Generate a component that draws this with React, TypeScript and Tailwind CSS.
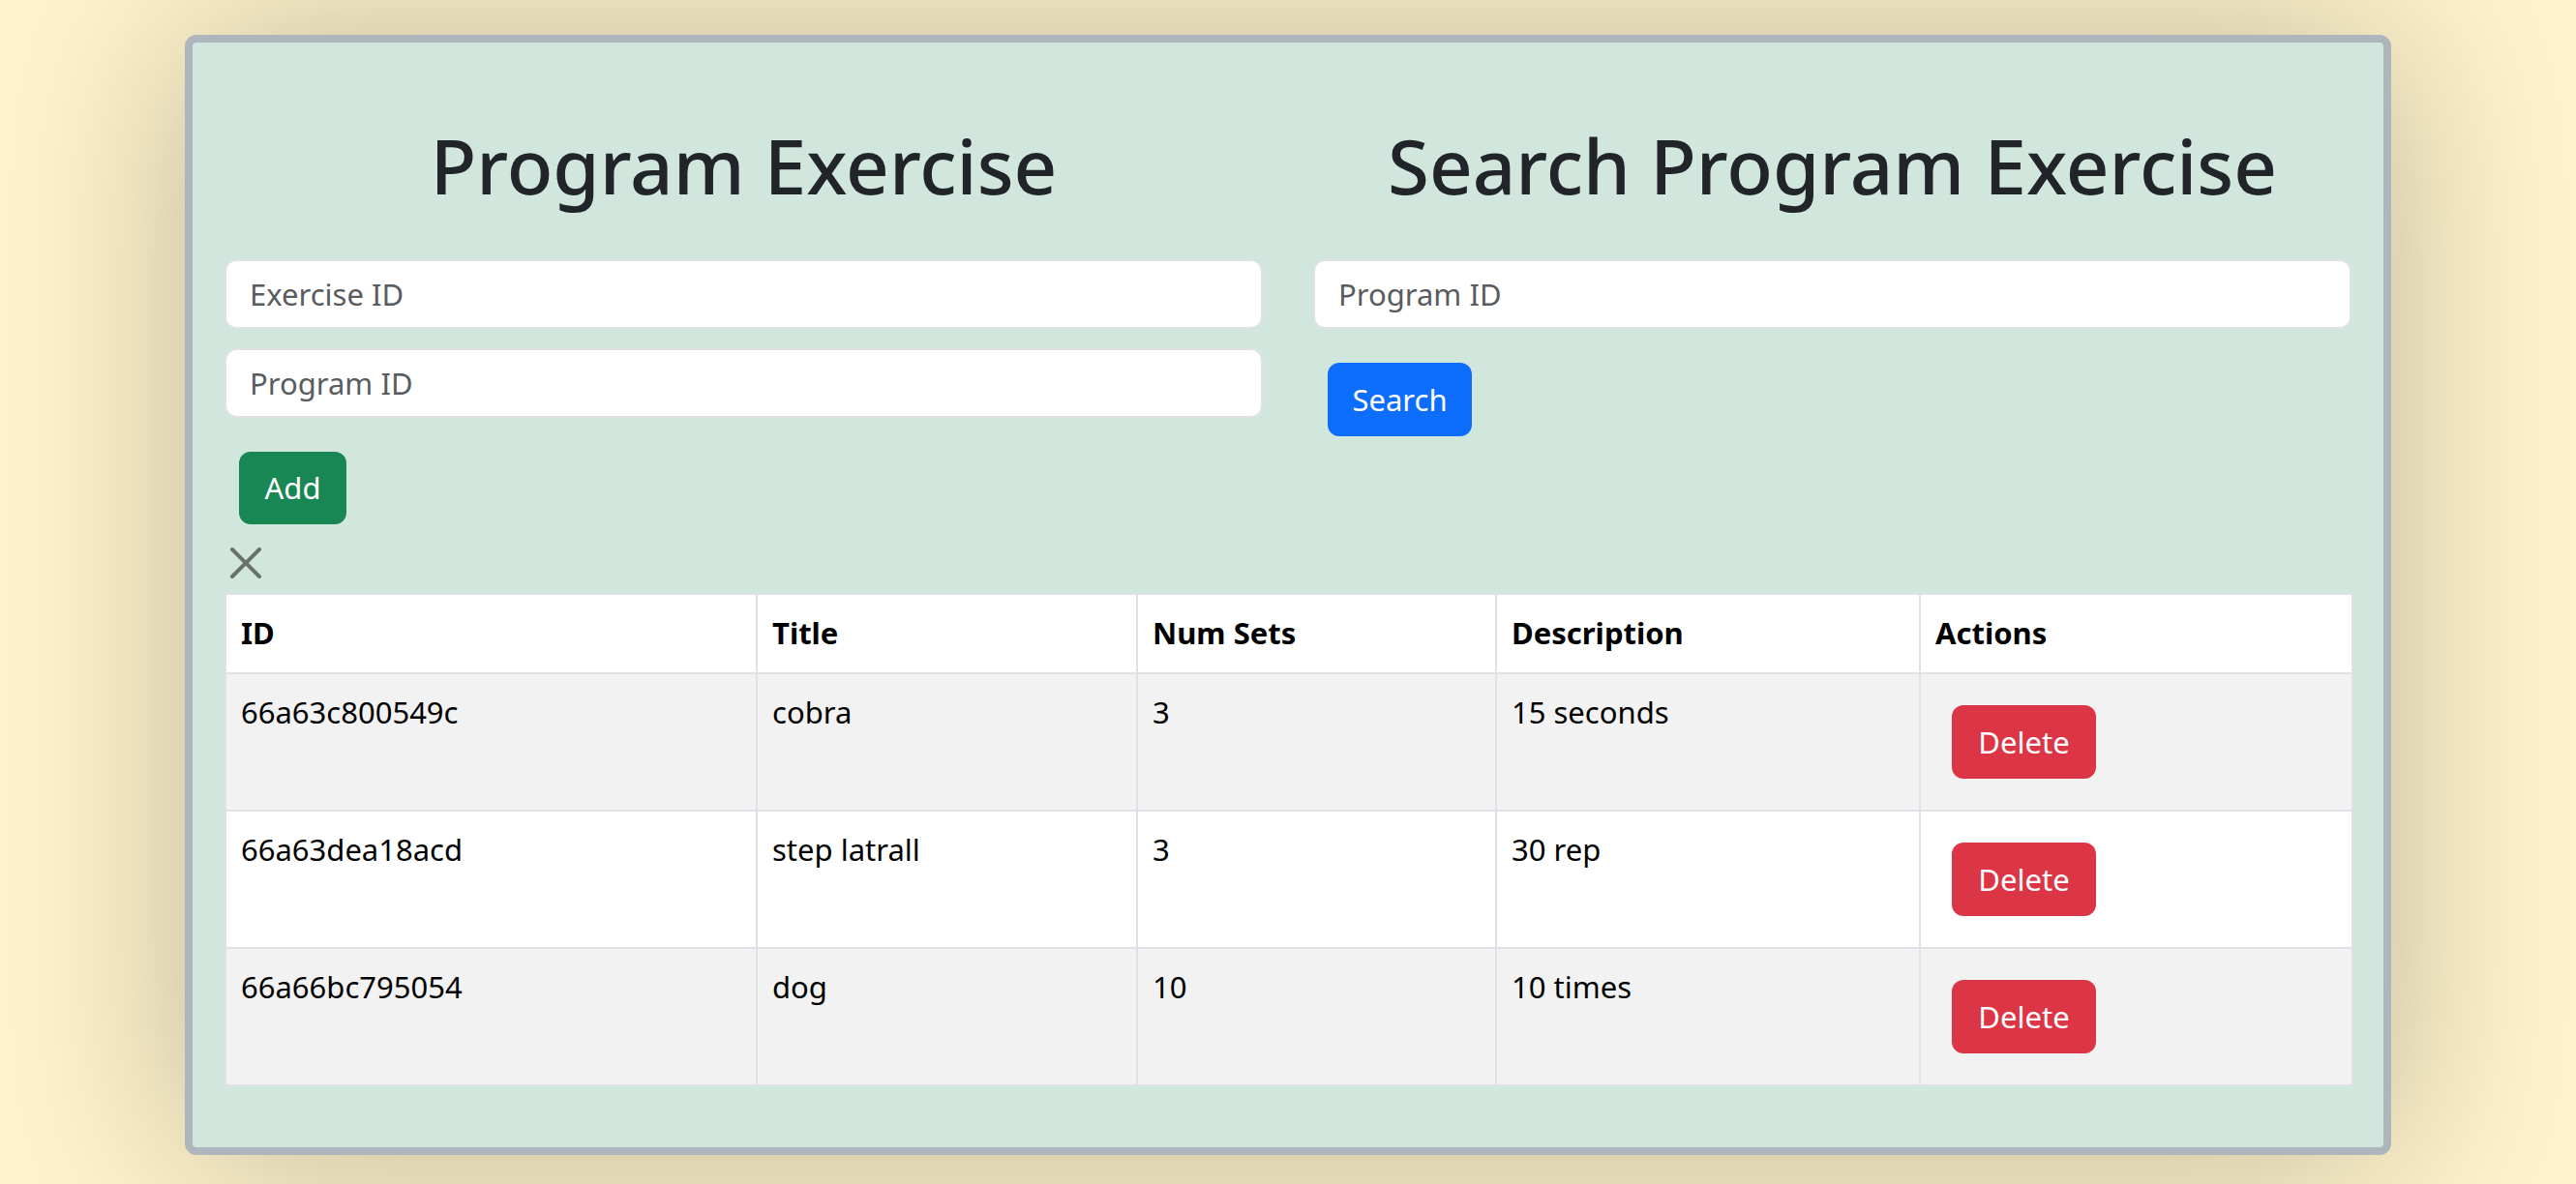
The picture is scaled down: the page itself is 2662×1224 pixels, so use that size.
import React from "react";

const rows = [
  { id: "66a63c800549c", title: "cobra", sets: "3", desc: "15 seconds" },
  { id: "66a63dea18acd", title: "step latrall", sets: "3", desc: "30 rep" },
  { id: "66a66bc795054", title: "dog", sets: "10", desc: "10 times" },
];

const font = { fontFamily: '"Noto Sans", "Open Sans", sans-serif' };

export default function App() {
  return (
    <div
      className="w-full h-screen overflow-hidden bg-[#fff3cd] pt-[36px]"
      style={font}
    >
      <div className="mx-auto w-[2280px] h-[1158px] rounded-[12px] border-8 border-[#adb5bd] bg-[#d1e7dd] shadow-[0_4px_200px_rgba(0,0,0,0.26)] px-[33px] pt-[79px]">
        <div className="grid grid-cols-2 gap-[52px]">
          <div className="flex flex-col items-start">
            <h1 className="w-full text-center text-[78px] leading-[96px] h-[96px] font-medium text-[#212529]">
              Program Exercise
            </h1>
            <input
              className="mt-[49px] w-full h-[72px] rounded-[12px] bg-white border-2 border-[#dee2e6] px-[24px] text-[31px] text-[#212529] placeholder:text-[#595c5f] outline-none"
              placeholder="Exercise ID"
            />
            <input
              className="mt-[20px] w-full h-[72px] rounded-[12px] bg-white border-2 border-[#dee2e6] px-[24px] text-[31px] text-[#212529] placeholder:text-[#595c5f] outline-none"
              placeholder="Program ID"
            />
            <button className="mt-[35px] ml-[15px] w-[111px] h-[75px] rounded-[12px] bg-[#198754] text-white text-[31px] flex items-center justify-center">
              Add
            </button>
          </div>
          <div className="flex flex-col items-start">
            <h1 className="w-full text-center text-[78px] leading-[96px] h-[96px] font-medium text-[#212529]">
              Search Program Exercise
            </h1>
            <input
              className="mt-[49px] w-full h-[72px] rounded-[12px] bg-white border-2 border-[#dee2e6] px-[24px] text-[31px] text-[#212529] placeholder:text-[#595c5f] outline-none"
              placeholder="Program ID"
            />
            <button className="mt-[35px] ml-[15px] w-[149px] h-[76px] rounded-[12px] bg-[#0d6efd] text-white text-[31px] flex items-center justify-center">
              Search
            </button>
          </div>
        </div>

        <button className="mt-[24px] ml-[6px] block w-[32px] h-[32px] opacity-50">
          <svg viewBox="0 0 16 16" width="32" height="32" fill="#000">
            <path d="M.293.293a1 1 0 0 1 1.414 0L8 6.586 14.293.293a1 1 0 1 1 1.414 1.414L9.414 8l6.293 6.293a1 1 0 0 1-1.414 1.414L8 9.414l-6.293 6.293a1 1 0 0 1-1.414-1.414L6.586 8 .293 1.707a1 1 0 0 1 0-1.414z" />
          </svg>
        </button>

        <table className="mt-[15px] w-[2198px] table-fixed border-collapse text-[31px] text-black">
          <colgroup>
            <col className="w-[549px]" />
            <col className="w-[393px]" />
            <col className="w-[371px]" />
            <col className="w-[438px]" />
            <col className="w-[447px]" />
          </colgroup>
          <thead>
            <tr className="bg-white">
              {["ID", "Title", "Num Sets", "Description", "Actions"].map((h) => (
                <th
                  key={h}
                  className="border-2 border-[#dee2e6] px-[15px] pt-[15px] pb-[17px] h-[81px] text-left font-bold leading-[48px] align-top"
                >
                  {h}
                </th>
              ))}
            </tr>
          </thead>
          <tbody>
            {rows.map((r, i) => (
              <tr key={r.id} className={i % 2 === 0 ? "bg-[#f2f2f2]" : "bg-white"}>
                <td className="border-2 border-[#dee2e6] px-[15px] pt-[15px] pb-[17px] align-top leading-[48px]">
                  {r.id}
                </td>
                <td className="border-2 border-[#dee2e6] px-[15px] pt-[15px] pb-[17px] align-top leading-[48px]">
                  {r.title}
                </td>
                <td className="border-2 border-[#dee2e6] px-[15px] pt-[15px] pb-[17px] align-top leading-[48px]">
                  {r.sets}
                </td>
                <td className="border-2 border-[#dee2e6] px-[15px] pt-[15px] pb-[17px] align-top leading-[48px]">
                  {r.desc}
                </td>
                <td className="border-2 border-[#dee2e6] px-[16px] py-[16px] align-top">
                  <button className="m-[16px] w-[149px] h-[76px] rounded-[12px] bg-[#dc3545] text-white text-[31px] flex items-center justify-center">
                    Delete
                  </button>
                </td>
              </tr>
            ))}
          </tbody>
        </table>
      </div>
    </div>
  );
}
